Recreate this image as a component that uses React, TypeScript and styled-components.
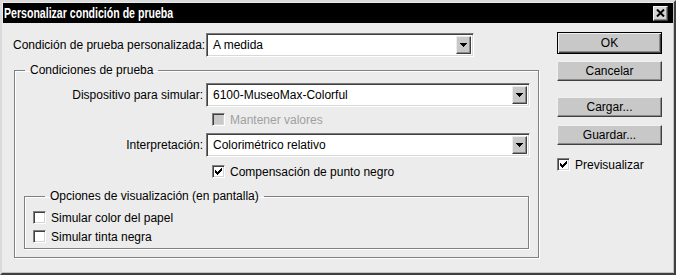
import React from "react";
import styled, { createGlobalStyle } from "styled-components";

const GlobalStyle = createGlobalStyle`
    html, body {
        margin: 0;
        padding: 0;
        background: #ececec;
    }
    body {
        font-family: "Liberation Sans", Arial, sans-serif;
        font-size: 12px;
        color: #000;
    }
    * {
        box-sizing: border-box;
    }
`;

const Window = styled.div`
    width: 676px;
    height: 275px;
    display: flex;
    flex-direction: column;
    padding: 1px;
    background: #ececec;
    border: 2px solid;
    border-color: #dadada #404040 #404040 #dadada;
    box-shadow: inset -1px -1px 0 #c2c2c2;
`;

const TitleBar = styled.div`
    height: 20px;
    flex: none;
    display: flex;
    align-items: center;
    justify-content: space-between;
    padding: 0 5px 0 1px;
    background: #000;
    color: #fff;
    overflow: hidden;
`;

// narrow caption face: Arial bold squeezed to the width of the original condensed font
const Title = styled.span`
    font-family: "Liberation Sans", Arial, sans-serif;
    font-weight: bold;
    font-size: 14px;
    white-space: nowrap;
    display: inline-block;
    transform: scaleX(0.755);
    transform-origin: left center;
`;

const CloseButton = styled.div`
    width: 15px;
    height: 15px;
    display: flex;
    align-items: center;
    justify-content: center;
    background: #d4d4d4;
    border: 1px solid;
    border-color: #f4f4f4 #404040 #404040 #f4f4f4;
    box-shadow: inset -1px -1px 0 #888;
`;

const Body = styled.div`
    flex: 1;
    display: flex;
    justify-content: space-between;
    padding: 9px 11px 0 10px;
`;

const LeftColumn = styled.div`
    width: 526px;
    padding-top: 1px;
    display: flex;
    flex-direction: column;
`;

const RightColumn = styled.div`
    width: 105px;
    display: flex;
    flex-direction: column;
`;

const FieldRow = styled.div<{ $mt?: number }>`
    display: flex;
    align-items: center;
    gap: 3px;
    height: 24px;
    margin-top: ${(p) => p.$mt ?? 0}px;
`;

const Label = styled.span<{ $width: number; $align?: string }>`
    width: ${(p) => p.$width}px;
    text-align: ${(p) => p.$align ?? "right"};
    white-space: nowrap;
`;

const SelectBox = styled.div<{ $width: number }>`
    width: ${(p) => p.$width}px;
    height: 24px;
    display: flex;
    align-items: center;
    justify-content: space-between;
    background: #fff;
    border: 1px solid;
    border-color: #7a7a7a #ffffff #ffffff #7a7a7a;
    box-shadow: inset 1px 1px 0 #404040, inset -1px -1px 0 #d8d8d8;
    padding: 0 2px 0 6px;
`;

const SelectValue = styled.span`
    white-space: nowrap;
`;

const ArrowButton = styled.div`
    width: 15px;
    height: 18px;
    display: flex;
    align-items: center;
    justify-content: center;
    background: #c8c8c8;
    border: 1px solid;
    border-color: #ececec #404040 #404040 #ececec;
    box-shadow: inset -1px -1px 0 #8a8a8a;
`;

const Group = styled.fieldset<{ $ml: number; $mt: number; $width: number; $pt: number; $pb: number; $pl: number }>`
    margin: ${(p) => p.$mt}px 0 0 ${(p) => p.$ml}px;
    width: ${(p) => p.$width}px;
    padding: ${(p) => p.$pt}px 0 ${(p) => p.$pb}px ${(p) => p.$pl}px;
    border: 1px solid #808080;
    box-shadow: 1px 1px 0 #ffffff, inset 1px 1px 0 #ffffff;
    min-width: 0;
    display: flex;
    flex-direction: column;
`;

const Legend = styled.legend<{ $ml: number }>`
    margin-left: ${(p) => p.$ml}px;
    padding: 0 5px;
    line-height: 14px;
`;

const CheckRow = styled.label<{ $mt?: number; $ml?: number; $disabled?: boolean }>`
    display: flex;
    align-items: center;
    gap: 5px;
    height: 13px;
    margin-top: ${(p) => p.$mt ?? 0}px;
    margin-left: ${(p) => p.$ml ?? 0}px;
    color: ${(p) => (p.$disabled ? "#a0a0a0" : "#000")};
    white-space: nowrap;
`;

const Box = styled.span<{ $disabled?: boolean }>`
    width: 13px;
    height: 13px;
    flex: none;
    display: flex;
    align-items: center;
    justify-content: center;
    background: ${(p) => (p.$disabled ? "#c8c8c8" : "#fff")};
    border: 1px solid;
    border-color: #808080 #ffffff #ffffff #808080;
    box-shadow: inset 1px 1px 0 #404040, inset -1px -1px 0 #d4d4d4;
`;

const Button = styled.div<{ $mt?: number; $default?: boolean }>`
    height: ${(p) => (p.$default ? 22 : 20)}px;
    margin-top: ${(p) => p.$mt ?? 0}px;
    display: flex;
    align-items: center;
    justify-content: center;
    background: #c8c8c8;
    border: 1px solid;
    border-color: ${(p) => (p.$default ? "#000" : "#f0f0f0 #404040 #404040 #f0f0f0")};
    box-shadow: ${(p) =>
        p.$default
            ? "inset 1px 1px 0 #f0f0f0, inset -1px -1px 0 #404040, inset -2px -2px 0 #8a8a8a"
            : "inset -1px -1px 0 #8a8a8a"};
`;

const CheckMark = () => (
    <svg width="7" height="7" viewBox="0 0 7 7" shapeRendering="crispEdges">
        <path
            d="M6 0h1v1H6zM5 1h2v1H5zM0 2h1v1H0zM4 2h3v1H4zM0 3h2v1H0zM3 3h3v1H3zM0 4h5v1H0zM1 5h3v1H1zM2 6h1v1H2z"
            fill="#000"
        />
    </svg>
);

const Checkbox: React.FC<{ checked?: boolean; disabled?: boolean; text: string; mt?: number; ml?: number }> = ({
    checked,
    disabled,
    text,
    mt,
    ml,
}) => (
    <CheckRow $mt={mt} $ml={ml} $disabled={disabled}>
        <Box $disabled={disabled}>{checked && <CheckMark />}</Box>
        <span>{text}</span>
    </CheckRow>
);

const Select: React.FC<{ value: string; width: number }> = ({ value, width }) => (
    <SelectBox $width={width}>
        <SelectValue>{value}</SelectValue>
        <ArrowButton>
            <svg width="7" height="4" viewBox="0 0 7 4" shapeRendering="crispEdges">
                <path d="M0 0h7v1H0zM1 1h5v1H1zM2 2h3v1H2zM3 3h1v1H3z" fill="#000" />
            </svg>
        </ArrowButton>
    </SelectBox>
);

const App: React.FC = () => {
    return (
        <>
            <GlobalStyle />
            <Window>
                <TitleBar>
                    <Title>Personalizar condición de prueba</Title>
                    <CloseButton>
                        <svg width="9" height="8" viewBox="0 0 9 8">
                            <path d="M1 0.5l7 7M8 0.5l-7 7" stroke="#000" strokeWidth="2" />
                        </svg>
                    </CloseButton>
                </TitleBar>
                <Body>
                    <LeftColumn>
                        <FieldRow>
                            <Label $width={190} $align="left">
                                Condición de prueba personalizada:
                            </Label>
                            <Select value="A medida" width={268} />
                        </FieldRow>
                        <Group $ml={1} $mt={6} $width={525} $pt={6} $pb={8} $pl={0}>
                            <Legend $ml={10}>Condiciones de prueba</Legend>
                            <FieldRow>
                                <Label $width={188}>Dispositivo para simular:</Label>
                                <Select value="6100-MuseoMax-Colorful" width={324} />
                            </FieldRow>
                            <Checkbox disabled text="Mantener valores" mt={6} ml={197} />
                            <FieldRow $mt={7}>
                                <Label $width={188}>Interpretación:</Label>
                                <Select value="Colorimétrico relativo" width={324} />
                            </FieldRow>
                            <Checkbox checked text="Compensación de punto negro" mt={8} ml={197} />
                            <Group $ml={9} $mt={11} $width={505} $pt={8} $pb={5} $pl={8}>
                                <Legend $ml={12}>Opciones de visualización (en pantalla)</Legend>
                                <Checkbox text="Simular color del papel" />
                                <Checkbox text="Simular tinta negra" mt={6} />
                            </Group>
                        </Group>
                    </LeftColumn>
                    <RightColumn>
                        <Button $default>OK</Button>
                        <Button $mt={7}>Cancelar</Button>
                        <Button $mt={16}>Cargar...</Button>
                        <Button $mt={8}>Guardar...</Button>
                        <Checkbox checked text="Previsualizar" mt={13} />
                    </RightColumn>
                </Body>
            </Window>
        </>
    );
};

export default App;
